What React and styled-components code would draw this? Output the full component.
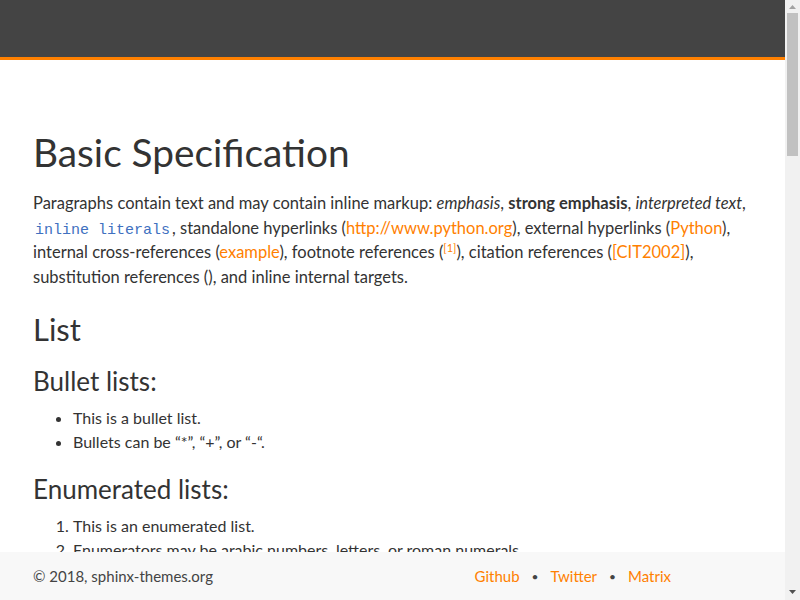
import { createGlobalStyle, styled } from "styled-components";

const GlobalStyle = createGlobalStyle`
    html, body {
        margin: 0;
        padding: 0;
        background: #fff;
        overflow: hidden;
    }
    body {
        font-family: "Lato", "Noto Sans", sans-serif;
        color: #333;
        font-size: 16px;
    }
`

const StyledWindow = styled.div`
    display: flex;
    flex-direction: row;
    height: 100vh;
`
const StyledPage = styled.div`
    flex: 1;
    min-width: 0;
    display: flex;
    flex-direction: column;
`
const StyledScroller = styled.div`
    flex: 1;
    overflow: hidden;
`
const StyledScrollTrack = styled.div`
    width: 15px;
    background: #f1f1f1;
    display: flex;
    flex-direction: column;
    align-items: center;
`
const StyledScrollButton = styled.div`
    width: 15px;
    height: ${(p) => (p.$down ? "17px" : "13px")};
    display: flex;
    align-items: center;
    justify-content: center;
    margin-top: ${(p) => (p.$down ? "auto" : "0")};
`
const StyledScrollThumb = styled.div`
    width: 11px;
    height: 143px;
    background: #c1c1c1;
`
const StyledHeader = styled.header`
    height: 57px;
    background: #444;
    border-bottom: 3px solid #ff8000;
`
const StyledMain = styled.main`
    padding: 69px 33px 40px 33px;
`
const StyledTitle = styled.h1`
    font-family: "Lato", sans-serif;
    font-weight: 400;
    font-size: 38.8px;
    line-height: 46px;
    margin: 0 0 16px 0;
    color: #333;
`
const StyledH2 = styled.h2`
    font-family: "Lato", sans-serif;
    font-weight: 400;
    font-size: 31px;
    line-height: 38px;
    margin: 20px 0 10px 0;
`
const StyledH3 = styled.h3`
    font-family: "Lato", sans-serif;
    font-weight: 400;
    font-size: 26px;
    line-height: 34px;
    margin: 16px 0 8px 0;
`
const StyledText = styled.p`
    font-size: 16.5px;
    line-height: 24.7px;
    margin: 0 0 16px 0;
`
const StyledLink = styled.a`
    color: #ff8000;
    text-decoration: none;
`
const StyledCode = styled.code`
    font-family: "Liberation Mono", monospace;
    font-size: 15px;
    line-height: 0;
    color: #4070c0;
    padding: 0 2px;
`
const StyledSup = styled.sup`
    font-size: 11px;
    line-height: 0;
    vertical-align: 6px;
`
const StyledList = styled.ul`
    margin: 0 0 18px 0;
    padding-left: 40px;
    font-size: 16px;
    line-height: 24px;
`
const StyledOList = styled.ol`
    margin: 0 0 16px 0;
    padding-left: 40px;
    font-size: 16px;
    line-height: 24px;
`
const StyledFooter = styled.footer`
    flex-shrink: 0;
    height: 48px;
    background: #f8f8f8;
    display: flex;
    align-items: center;
    justify-content: space-between;
    padding: 0 114px 0 33px;
    font-size: 15px;
    color: #444;
`
const StyledFooterLinks = styled.nav`
    display: flex;
    align-items: center;
    gap: 12px;
`
const StyledDot = styled.span`
    color: #444;
    font-size: 12px;
`

function App() {
    return (
        <StyledWindow>
            <GlobalStyle />
            <StyledPage>
                <StyledScroller>
                    <StyledHeader />
                    <StyledMain>
                        <StyledTitle>Basic Specification</StyledTitle>
                        <StyledText>
                            Paragraphs contain text and may contain inline markup: <em>emphasis</em>,{" "}
                            <strong>strong emphasis</strong>, <em>interpreted text</em>,{" "}
                            <StyledCode>inline literals</StyledCode>, standalone hyperlinks (
                            <StyledLink href="#">http://www.python.org</StyledLink>), external hyperlinks (
                            <StyledLink href="#">Python</StyledLink>), internal cross-references (
                            <StyledLink href="#">example</StyledLink>), footnote references (
                            <StyledLink href="#"><StyledSup>[1]</StyledSup></StyledLink>), citation references (
                            <StyledLink href="#">[CIT2002]</StyledLink>), substitution references (), and inline
                            internal targets.
                        </StyledText>
                        <StyledH2>List</StyledH2>
                        <StyledH3>Bullet lists:</StyledH3>
                        <StyledList>
                            <li>This is a bullet list.</li>
                            <li>Bullets can be “*”, “+”, or “-“.</li>
                        </StyledList>
                        <StyledH3>Enumerated lists:</StyledH3>
                        <StyledOList>
                            <li>This is an enumerated list.</li>
                            <li>Enumerators may be arabic numbers, letters, or roman numerals.</li>
                            <li>Lists may be nested.</li>
                        </StyledOList>
                    </StyledMain>
                </StyledScroller>
                <StyledFooter>
                    <span>© 2018, sphinx-themes.org</span>
                    <StyledFooterLinks>
                        <StyledLink href="#">Github</StyledLink>
                        <StyledDot>•</StyledDot>
                        <StyledLink href="#">Twitter</StyledLink>
                        <StyledDot>•</StyledDot>
                        <StyledLink href="#">Matrix</StyledLink>
                    </StyledFooterLinks>
                </StyledFooter>
            </StyledPage>
            <StyledScrollTrack>
                <StyledScrollButton>
                    <svg width="7" height="4" viewBox="0 0 7 4">
                        <polygon points="3.5,0 7,4 0,4" fill="#a3a3a3" />
                    </svg>
                </StyledScrollButton>
                <StyledScrollThumb />
                <StyledScrollButton $down>
                    <svg width="7" height="4" viewBox="0 0 7 4">
                        <polygon points="0,0 7,0 3.5,4" fill="#505050" />
                    </svg>
                </StyledScrollButton>
            </StyledScrollTrack>
        </StyledWindow>
    )
}

export default App;
